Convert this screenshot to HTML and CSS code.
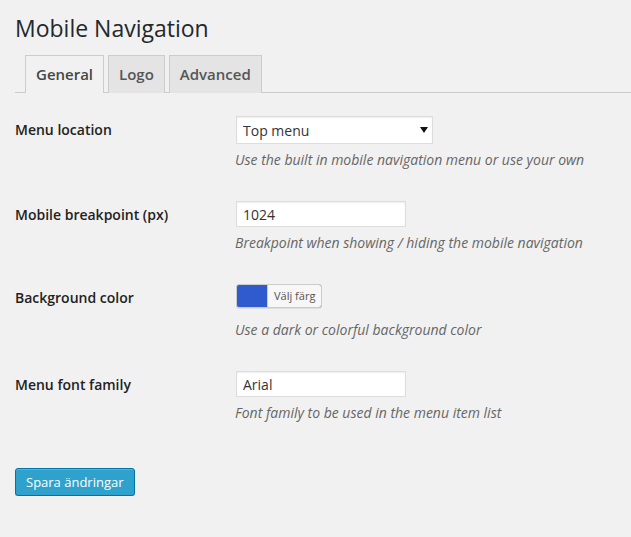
FILE: index.html
```html
<!DOCTYPE html>
<html lang="sv">
<head>
    <meta charset="UTF-8">
    <title>Mobile Navigation</title>
    <link rel="stylesheet" href="styles.css">
</head>
<body>
    <div class="wrap">
        <h1 class="page-title">Mobile Navigation</h1>

        <div class="nav-tab-wrapper">
            <a class="nav-tab nav-tab-active" href="#">General</a>
            <a class="nav-tab" href="#">Logo</a>
            <a class="nav-tab" href="#">Advanced</a>
        </div>

        <form>
            <table class="form-table">
                <tr class="row-select">
                    <th><label for="menu-location">Menu location</label></th>
                    <td>
                        <div class="select-wrap">
                            <select id="menu-location">
                                <option>Top menu</option>
                            </select>
                            <svg class="select-arrow" width="8" height="6" viewBox="0 0 8 6"><path d="M0 0h8L4 6z" fill="#111"/></svg>
                        </div>
                        <p class="description">Use the built in mobile navigation menu or use your own</p>
                    </td>
                </tr>
                <tr class="row-input">
                    <th><label for="breakpoint">Mobile breakpoint (px)</label></th>
                    <td>
                        <input type="text" id="breakpoint" class="text-input" value="1024">
                        <p class="description">Breakpoint when showing / hiding the mobile navigation</p>
                    </td>
                </tr>
                <tr class="row-color">
                    <th><label>Background color</label></th>
                    <td>
                        <a class="color-result" href="#"><span class="color-label">Välj färg</span></a>
                        <p class="description">Use a dark or colorful background color</p>
                    </td>
                </tr>
                <tr class="row-input">
                    <th><label for="font-family">Menu font family</label></th>
                    <td>
                        <input type="text" id="font-family" class="text-input" value="Arial">
                        <p class="description">Font family to be used in the menu item list</p>
                    </td>
                </tr>
            </table>

            <p class="submit">
                <button type="button" class="button-primary">Spara ändringar</button>
            </p>
        </form>
    </div>
</body>
</html>
```

FILE: styles.css
```css
* {
    box-sizing: border-box;
}

body {
    margin: 0;
    background: #f1f1f1;
    color: #444;
    font-family: "Open Sans", "Liberation Sans", sans-serif;
    font-size: 13px;
    line-height: 1.4;
}

.wrap {
    padding-left: 15px;
}

.page-title {
    margin: 0;
    padding-top: 14px;
    font-size: 23px;
    font-weight: 400;
    line-height: 29px;
    color: #23282d;
}

/* tabs */
.nav-tab-wrapper {
    display: flex;
    align-items: flex-end;
    margin-top: 12px;
    padding-left: 10px;
    border-bottom: 1px solid #ccc;
}

.nav-tab {
    margin-right: 4px;
    margin-bottom: -1px;
    padding: 6px 10px 7px;
    border: 1px solid #ccc;
    border-bottom: none;
    background: #e4e4e4;
    color: #555;
    font-size: 15px;
    font-weight: 600;
    line-height: 24px;
    text-decoration: none;
}

.nav-tab-active {
    background: #f1f1f1;
    color: #464646;
}

/* settings table */
.form-table {
    margin-top: 8px;
    border-collapse: collapse;
}

.form-table th {
    width: 210px;
    padding: 20px 10px 20px 0;
    text-align: left;
    vertical-align: top;
    color: #222;
    font-size: 14px;
    font-weight: 600;
    line-height: 1.3;
}

.form-table td {
    padding: 15px 10px 16px;
    vertical-align: top;
}

.description {
    margin: 6px 0 0;
    color: #666;
    font-size: 14px;
    font-style: italic;
    line-height: 20px;
}

.select-wrap {
    position: relative;
    width: 197px;
    margin-left: 1px;
}

.select-wrap select {
    display: block;
    width: 100%;
    height: 28px;
    padding: 0 20px 0 6px;
    border: 1px solid #ddd;
    border-radius: 0;
    background: #fff;
    box-shadow: inset 0 1px 2px rgba(0, 0, 0, 0.07);
    color: #333;
    font-family: inherit;
    font-size: 14px;
    -webkit-appearance: none;
    appearance: none;
}

.select-arrow {
    position: absolute;
    top: 11px;
    right: 5px;
}

.text-input {
    display: block;
    width: 170px;
    height: 26px;
    margin: 0 1px;
    padding: 0 6px;
    border: 1px solid #ddd;
    background: #fff;
    box-shadow: inset 0 1px 2px rgba(0, 0, 0, 0.07);
    color: #333;
    font-family: inherit;
    font-size: 14px;
}

/* color picker */
.color-result {
    display: inline-block;
    vertical-align: top;
    height: 24px;
    margin: 0 0 6px 1px;
    padding-left: 30px;
    border: 1px solid #ccc;
    border-radius: 3px;
    background: #305bcf;
    box-shadow: 0 1px 0 rgba(0, 0, 0, 0.08);
    text-decoration: none;
}

.color-label {
    display: block;
    padding: 0 6px;
    border-left: 1px solid #ccc;
    border-radius: 0 2px 2px 0;
    background: #f7f7f7;
    color: #555;
    font-size: 11px;
    line-height: 22px;
}

/* submit */
.submit {
    margin: 29px 0 0;
}

.button-primary {
    height: 28px;
    padding: 0 10px;
    border: 1px solid #0074a2;
    border-radius: 3px;
    background: #2ea2cc;
    box-shadow: inset 0 1px 0 rgba(120, 200, 230, 0.5), 0 1px 0 rgba(0, 0, 0, 0.15);
    color: #fff;
    font-family: inherit;
    font-size: 13px;
    line-height: 26px;
    cursor: pointer;
}
```
